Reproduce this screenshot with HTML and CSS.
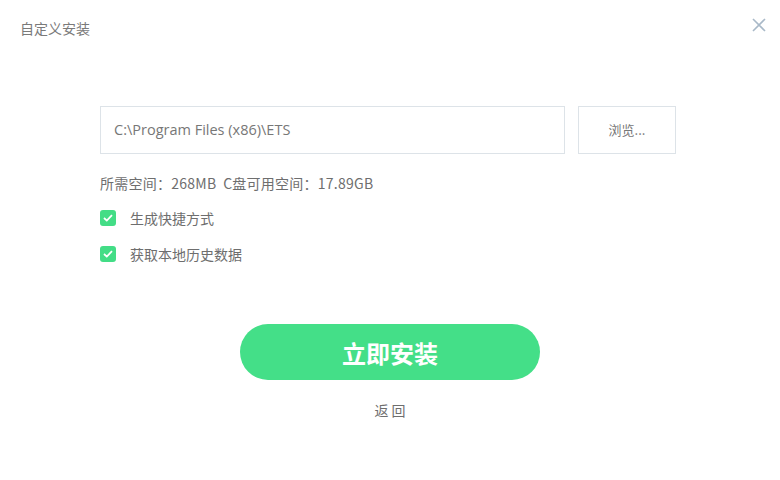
FILE: index.html
```html
<!DOCTYPE html>
<html lang="zh-CN">
<head>
  <meta charset="UTF-8">
  <title>自定义安装</title>
  <link rel="stylesheet" href="styles.css">
</head>
<body>
  <div class="window">
    <div class="header">
      <span class="title">自定义安装</span>
      <span class="close">
        <svg width="14" height="14" viewBox="0 0 14 14"><path d="M1 1L13 13M13 1L1 13" stroke="#a9b9c8" stroke-width="1.6" fill="none"/></svg>
      </span>
    </div>

    <div class="content">
      <div class="path-row">
        <div class="path-input">C:\Program Files (x86)\ETS</div>
        <div class="browse">浏览...</div>
      </div>
      <p class="space">所需空间：268MB&nbsp;&nbsp;C盘可用空间：17.89GB</p>
      <label class="option"><span class="check"><svg width="10" height="8" viewBox="0 0 10 8"><path d="M1 4L3.8 6.6L9 1.2" stroke="#fff" stroke-width="1.8" fill="none"/></svg></span>生成快捷方式</label>
      <label class="option"><span class="check"><svg width="10" height="8" viewBox="0 0 10 8"><path d="M1 4L3.8 6.6L9 1.2" stroke="#fff" stroke-width="1.8" fill="none"/></svg></span>获取本地历史数据</label>
    </div>

    <div class="actions">
      <button class="install">立即安装</button>
      <a class="back">返 回</a>
    </div>
  </div>
</body>
</html>
```

FILE: styles.css
```css
body {
  margin: 0;
  background-color: #fff;
  font-family: "Noto Sans CJK SC", "Noto Sans", sans-serif;
  color: #666;
}

.window {
  width: 780px;
  height: 480px;
}

.header {
  display: flex;
  justify-content: space-between;
  align-items: flex-start;
  padding: 19px 14px 0 20px;
  height: 87px;
}

.title {
  font-size: 14px;
  color: #7a7a7a;
  line-height: 18px;
}

.close {
  margin-top: -6px;
  cursor: pointer;
}

.content {
  padding: 0 0 0 100px;
}

.path-row {
  display: flex;
  gap: 13px;
}

.path-input {
  box-sizing: border-box;
  width: 465px;
  height: 48px;
  border: 1px solid #dde3e8;
  padding-left: 13px;
  font-family: "Open Sans", "Noto Sans CJK SC", sans-serif;
  font-size: 14.5px;
  line-height: 46px;
  color: #777;
}

.browse {
  box-sizing: border-box;
  width: 98px;
  height: 48px;
  border: 1px solid #dde3e8;
  text-align: center;
  line-height: 46px;
  font-size: 13px;
  color: #777;
}

.space {
  margin: 20px 0 0;
  font-size: 14px;
  line-height: 18px;
  letter-spacing: 0.25px;
  color: #6e6e6e;
}

.option {
  display: flex;
  align-items: center;
  gap: 14px;
  margin-top: 17px;
  font-size: 14px;
  color: #6e6e6e;
  line-height: 18px;
}

.option + .option {
  margin-top: 18px;
}

.check {
  width: 16px;
  height: 16px;
  border-radius: 3px;
  background-color: #43dd86;
  display: flex;
  align-items: center;
  justify-content: center;
}

.actions {
  display: flex;
  flex-direction: column;
  align-items: center;
  margin-top: 61px;
}

.install {
  width: 300px;
  height: 56px;
  border: none;
  border-radius: 28px;
  background-color: #44df88;
  color: #fff;
  font-family: "Noto Sans CJK SC", sans-serif;
  font-size: 24px;
  font-weight: bold;
  cursor: pointer;
}

.back {
  margin-top: 21px;
  font-size: 14px;
  color: #6e6e6e;
  line-height: 18px;
  cursor: pointer;
}
```
